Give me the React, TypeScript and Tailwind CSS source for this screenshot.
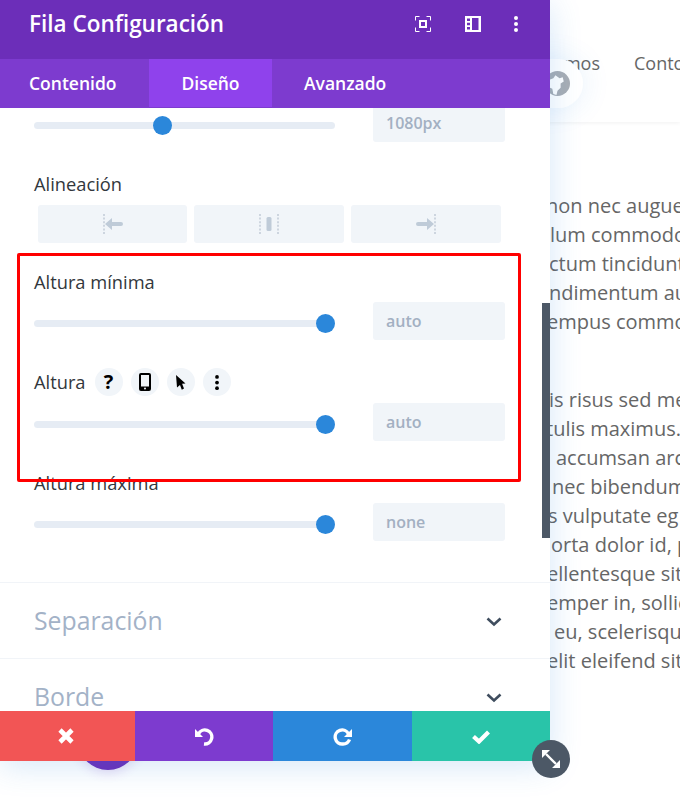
const font = { fontFamily: '"Open Sans", "Liberation Sans", sans-serif' };

const bodyLines = [
  { text: "non nec augue", cls: "ml-[-4px]" },
  { text: "lum commodo", cls: "ml-[0px]" },
  { text: "ctum tincidunt", cls: "ml-[-1px]" },
  { text: "ndimentum au", cls: "ml-[-1px]" },
  { text: "empus commo", cls: "ml-[-3px]" },
];

const bodyLines2 = [
  { text: "is risus sed me", cls: "ml-[-1px]" },
  { text: "tulis maximus.", cls: "ml-[-4px]" },
  { text: "accumsan arc", cls: "ml-[6px]" },
  { text: "nec bibendum", cls: "ml-[2px]" },
  { text: "s vulputate eg", cls: "ml-[-2px]" },
  { text: "orta dolor id, p", cls: "ml-[1px]" },
  { text: "ellentesque sit", cls: "ml-[-3px]" },
  { text: "emper in, sollic", cls: "ml-[-3px]" },
  { text: "eu, scelerisqu", cls: "ml-[4px]" },
  { text: "elit eleifend sit", cls: "ml-[-3px]" },
];

function Slider({ value, left }: { value: string; left: boolean }) {
  return (
    <div className="flex h-[38px] items-center pl-[34px] pr-[45px]">
      <div className="relative mt-[5px] h-[7px] w-[301px] rounded-full bg-[#e6ecf4]">
        <span
          className={
            left
              ? "absolute left-[119px] top-[-6px] h-[19px] w-[19px] rounded-full bg-[#2b87da]"
              : "absolute right-0 top-[-6px] h-[19px] w-[19px] rounded-full bg-[#2b87da]"
          }
        />
      </div>
      <div className="ml-[38px] flex h-[38px] w-[132px] items-center rounded-[3px] bg-[#f1f5f9] pl-[13px] text-[16px] font-semibold text-[#a3b0c2]">
        {value}
      </div>
    </div>
  );
}

function Label({ children }: { children: React.ReactNode }) {
  return <div className="pl-[34px] text-[18.3px] font-medium leading-[22px] text-[#32373c]">{children}</div>;
}

function Dots({ className }: { className: string }) {
  return (
    <svg viewBox="0 0 4 16" className={className} fill="currentColor">
      <circle cx="2" cy="2" r="2" />
      <circle cx="2" cy="8" r="2" />
      <circle cx="2" cy="14" r="2" />
    </svg>
  );
}

function AlignIcon({ kind }: { kind: "left" | "center" | "right" }) {
  return (
    <svg width="22" height="20" viewBox="0 0 22 20" fill="none" className="text-[#bfcbd8]">
      {kind !== "right" && <line x1="2" y1="0" x2="2" y2="20" stroke="#cdd5df" strokeWidth="2" strokeDasharray="2 1.6" />}
      {kind !== "left" && <line x1="20" y1="0" x2="20" y2="20" stroke="#cdd5df" strokeWidth="2" strokeDasharray="2 1.6" />}
      {kind === "left" && <path d="M3 10l7-6v4h9a2 2 0 010 4h-9v4z" fill="currentColor" />}
      {kind === "center" && <rect x="8.5" y="3" width="5" height="14" rx="1.5" fill="currentColor" />}
      {kind === "right" && <path d="M19 10l-7-6v4H3a2 2 0 000 4h9v4z" fill="currentColor" />}
    </svg>
  );
}

function Chevron() {
  return (
    <svg width="16" height="10" viewBox="0 0 16 10" fill="none" stroke="#3f4d5e" strokeWidth="2.6" className="mt-[2px]">
      <path d="M1.5 1.5L8 7.5l6.5-6" />
    </svg>
  );
}

function Accordion({ title }: { title: string }) {
  return (
    <div className="flex h-[76px] shrink-0 items-center justify-between border-t border-[#f1f4f8] pl-[34px] pr-[48px]">
      <span className="mt-[-2px] text-[24.8px] leading-[32px] text-[#a3b2c7]">{title}</span>
      <Chevron />
    </div>
  );
}

function HelpButton({ children }: { children: React.ReactNode }) {
  return <span className="flex h-[28px] w-[28px] items-center justify-center rounded-full bg-[#f1f5f9] text-black">{children}</span>;
}

export default function App() {
  return (
    <div className="relative h-[797px] w-[680px] overflow-hidden bg-white" style={font}>
      {/* page behind the modal */}
      <div className="flex h-[122px] items-start overflow-hidden pl-[500px] pt-[48px] text-[18px] font-medium leading-[30px] text-[#666] shadow-[0_1px_4px_rgba(0,0,0,0.06)]">
        <span className="w-[100px] shrink-0 text-right">somos</span>
        <span className="ml-[34px] shrink-0">Conto</span>
      </div>
      <div className="pl-[550px] pt-[69px] text-[20px] leading-[29px] text-[#666]">
        <div className="overflow-hidden whitespace-nowrap">
          {bodyLines.map((l) => (
            <div key={l.text} className={l.cls}>
              {l.text}
            </div>
          ))}
          <div className="h-[49px]" />
          {bodyLines2.map((l) => (
            <div key={l.text} className={l.cls}>
              {l.text}
            </div>
          ))}
        </div>
      </div>

      <div className="absolute left-[515px] top-[59px] flex h-[49px] w-[68px] items-center justify-center rounded-full bg-white pl-[17px] shadow-[0_0_30px_rgba(43,135,218,0.12)]">
        <svg width="25" height="25" viewBox="0 0 24 24">
          <circle cx="12" cy="12" r="12" fill="#a8adb4" />
          <path d="M0 10l8-3 2-3 4 3 3-1 1 4-3 2v4l-3 3-1 4-3-1-1-5-7-3z" fill="#fff" />
        </svg>
      </div>

      <div className="absolute left-[78px] top-[710px] h-[60px] w-[60px] rounded-full bg-[#6c2eb9] shadow-[0_2px_12px_rgba(108,46,185,0.2)]" />

      {/* settings modal */}
      <div className="absolute left-0 top-0 flex h-[761px] w-[550px] flex-col bg-white shadow-[0_5px_30px_rgba(43,135,218,0.2)]">
        <div className="flex h-[59px] shrink-0 items-center justify-between bg-[#6c2eb9] pb-[11px] pl-[29px] pr-[32px] text-white">
          <span className="text-[22.5px] font-semibold leading-[30px]">Fila Configuración</span>
          <div className="flex items-center">
            <svg width="16" height="16" viewBox="0 0 16 16" fill="none" stroke="#fff">
              <path d="M.5 4.5V.5h4M11.5.5h4v4M15.5 11.5v4h-4M4.5 15.5h-4v-4" />
              <rect x="5" y="5" width="6" height="6" strokeWidth="2" />
            </svg>
            <svg width="16" height="16" viewBox="0 0 16 16" className="ml-[34px]">
              <path fillRule="evenodd" fill="#fff" d="M0 0h16v16H0zM7 2v12h6.5V2zM2 2.5v2.5h3V2.5zM2 6.8v2.4h3V6.8zM2 11v2.5h3V11z" />
            </svg>
            <Dots className="ml-[33px] h-[16px] w-[4px] text-white" />
          </div>
        </div>

        <div className="flex h-[49px] shrink-0 bg-[#7d3bcf] pb-[1px] text-[17.5px] font-semibold text-white">
          <div className="flex w-[149px] items-center pl-[29px]">Contenido</div>
          <div className="flex w-[123px] items-center justify-center bg-[#8f42ec]">Diseño</div>
          <div className="flex items-center pl-[32px]">Avanzado</div>
        </div>

        <div className="relative min-h-0 flex-1 overflow-hidden">
          <div className="mt-[-4px]">
            <Slider value="1080px" left />
            <div className="mt-[31px]">
              <Label>Alineación</Label>
            </div>
            <div className="mt-[10px] flex gap-[7px] pl-[38px]">
              <div className="flex h-[38px] w-[149px] items-center justify-center rounded-[3px] bg-[#f1f5f9]">
                <AlignIcon kind="left" />
              </div>
              <div className="flex h-[38px] w-[150px] items-center justify-center rounded-[3px] bg-[#f1f5f9]">
                <AlignIcon kind="center" />
              </div>
              <div className="flex h-[38px] w-[150px] items-center justify-center rounded-[3px] bg-[#f1f5f9]">
                <AlignIcon kind="right" />
              </div>
            </div>
            <div className="mt-[28px]">
              <Label>Altura mínima</Label>
            </div>
            <div className="mt-[9px]">
              <Slider value="auto" left={false} />
            </div>
            <div className="mt-[28px] flex items-center gap-[9px] pr-[34px]">
              <Label>Altura</Label>
              <div className="flex gap-[8px]">
                <HelpButton>
                  <span className="text-[20px] font-bold leading-none">?</span>
                </HelpButton>
                <HelpButton>
                  <svg width="12" height="18" viewBox="0 0 12 18">
                    <path fillRule="evenodd" d="M2 0h8a2 2 0 012 2v14a2 2 0 01-2 2H2a2 2 0 01-2-2V2a2 2 0 012-2zM2 2v11.5h8V2zM6 14.5a1 1 0 100 2 1 1 0 000-2z" />
                  </svg>
                </HelpButton>
                <HelpButton>
                  <svg width="10" height="15" viewBox="0 0 10 15">
                    <path d="M0 0l9.5 8.4-3.4.3 1.9 4.8-2.2 1.2L4 9.9 1 12.5z" />
                  </svg>
                </HelpButton>
                <HelpButton>
                  <Dots className="h-[15px] w-[4px]" />
                </HelpButton>
              </div>
            </div>
            <div className="mt-[7px]">
              <Slider value="auto" left={false} />
            </div>
            <div className="mt-[31px]">
              <Label>Altura máxima</Label>
            </div>
            <div className="mt-[9px]">
              <Slider value="none" left={false} />
            </div>
            <div className="mt-[41px]">
              <Accordion title="Separación" />
              <Accordion title="Borde" />
            </div>
          </div>
          <div className="absolute right-0 top-[195px] h-[235px] w-[8px] bg-[#4c5866]" />
        </div>

        <div className="flex h-[50px] shrink-0">
          <div className="flex w-[135px] items-center justify-center bg-[#f25555] pr-[4px]">
            <svg width="16" height="16" viewBox="0 0 16 16" stroke="#fff" strokeWidth="4.6">
              <path d="M2 2l12 12M14 2L2 14" />
            </svg>
          </div>
          <div className="flex w-[138px] items-center justify-center bg-[#7d3bcf] pt-[2px]">
            <svg width="20" height="20" viewBox="0 0 20 20" fill="none">
              <path d="M4.5 7A7 7 0 1110 17" stroke="#fff" strokeWidth="3.4" />
              <path d="M1 2v8h8z" fill="#fff" />
            </svg>
          </div>
          <div className="flex w-[139px] items-center justify-center bg-[#2b87da] pt-[2px]">
            <svg width="20" height="20" viewBox="0 0 20 20" fill="none">
              <path d="M15.5 7A7 7 0 1010 17a7 7 0 006.5-4.5" stroke="#fff" strokeWidth="3.4" />
              <path d="M19 2v8h-8z" fill="#fff" />
            </svg>
          </div>
          <div className="flex flex-1 items-center justify-center bg-[#29c4a9] pt-[2px]">
            <svg width="18" height="14" viewBox="0 0 18 14" fill="none" stroke="#fff" strokeWidth="4.2">
              <path d="M1.5 6.5L7 11.5 16.5 2" />
            </svg>
          </div>
        </div>
      </div>

      {/* annotation drawn over the screenshot */}
      <div className="absolute left-[17px] top-[253px] h-[229px] w-[504px] rounded-[2px] border-[3px] border-[#ff0000]" />

      <div className="absolute left-[532px] top-[740px] flex h-[38px] w-[38px] items-center justify-center rounded-full bg-[#4c5866]">
        <svg width="20" height="20" viewBox="0 0 20 20" fill="#fff">
          <path d="M5 5l10 10" stroke="#fff" strokeWidth="2.4" />
          <path d="M1 1h8L1 9zM19 19h-8l8-8z" />
        </svg>
      </div>
    </div>
  );
}
